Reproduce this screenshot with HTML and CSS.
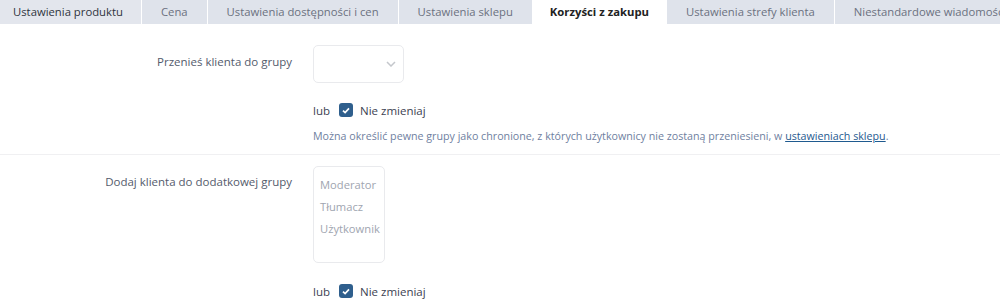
FILE: index.html
```html
<!DOCTYPE html>
<html lang="pl">
<head>
    <meta charset="UTF-8">
    <title>Korzyści z zakupu</title>
    <link rel="stylesheet" href="styles.css">
</head>
<body>

    <!-- Tabs -->
    <div class="tabs">
        <div class="tab tab-first">Ustawienia produktu</div>
        <div class="tab">Cena</div>
        <div class="tab">Ustawienia dostępności i cen</div>
        <div class="tab">Ustawienia sklepu</div>
        <div class="tab active">Korzyści z zakupu</div>
        <div class="tab">Ustawienia strefy klienta</div>
        <div class="tab">Niestandardowe wiadomości</div>
    </div>

    <!-- Move to group -->
    <div class="section section-first">
        <div class="row">
            <label class="row-label label-mid">Przenieś klienta do grupy</label>
            <div class="row-control">
                <div class="select">
                    <svg class="chevron" width="10" height="6" viewBox="0 0 10 6">
                        <path d="M1 1 L5 5 L9 1" fill="none" stroke="#c4c7cc" stroke-width="1.5"/>
                    </svg>
                </div>
                <div class="keep">
                    <span>lub</span>
                    <span class="check">
                        <svg width="8" height="7" viewBox="0 0 8 7">
                            <path d="M1 3.6 L3.1 5.6 L7 1.4" fill="none" stroke="#fff" stroke-width="1.7"/>
                        </svg>
                    </span>
                    <span>Nie zmieniaj</span>
                </div>
                <p class="hint">Można określić pewne grupy jako chronione, z których użytkownicy nie zostaną przeniesieni, w <a href="#">ustawieniach sklepu</a>.</p>
            </div>
        </div>
    </div>

    <!-- Additional group -->
    <div class="section">
        <div class="row">
            <label class="row-label label-top">Dodaj klienta do dodatkowej grupy</label>
            <div class="row-control">
                <div class="multi">
                    <div class="option">Moderator</div>
                    <div class="option">Tłumacz</div>
                    <div class="option">Użytkownik</div>
                </div>
                <div class="keep keep-last">
                    <span>lub</span>
                    <span class="check">
                        <svg width="8" height="7" viewBox="0 0 8 7">
                            <path d="M1 3.6 L3.1 5.6 L7 1.4" fill="none" stroke="#fff" stroke-width="1.7"/>
                        </svg>
                    </span>
                    <span>Nie zmieniaj</span>
                </div>
            </div>
        </div>
    </div>

</body>
</html>
```

FILE: styles.css
```css
* {
  margin: 0;
  padding: 0;
  box-sizing: border-box;
}

body {
  background: #fff;
  font-family: "Open Sans", "Noto Sans", sans-serif;
  font-size: 11.5px;
  color: #4f5668;
  overflow: hidden;
}

/* tab bar */
.tabs {
  display: flex;
  gap: 1px;
  background: #fff;
  height: 24px;
  white-space: nowrap;
  font-size: 11.3px;
  overflow: hidden;
}

.tab {
  background: #dfe3eb;
  color: #6b7180;
  padding: 0 19px;
  line-height: 24px;
  flex: none;
}

.tab-first {
  padding-left: 13px;
  padding-right: 18px;
  color: #2f3440;
  background: #e3e6ed;
}

.tab:last-child {
  flex: 1;
}

.tab.active {
  background: #fff;
  color: #222;
  font-weight: bold;
  padding: 0 17px;
}

/* form rows */
.section {
  border-top: 1px solid #f0f0f2;
  padding-top: 11px;
}

.section-first {
  border-top: none;
  padding-top: 21px;
  padding-bottom: 11px;
}

.row {
  display: grid;
  grid-template-columns: 292px 1fr;
  column-gap: 21px;
}

.row-label {
  text-align: right;
  color: #545b6c;
}

.label-mid {
  margin-top: 9px;
}

.label-top {
  margin-top: 8px;
}

.select {
  width: 91px;
  height: 38px;
  border: 1px solid #e9eaed;
  border-radius: 5px;
  display: flex;
  justify-content: flex-end;
  align-items: center;
  padding-right: 7px;
}

.keep {
  display: flex;
  align-items: center;
  gap: 7px;
  margin-top: 17px;
  color: #3c4252;
  height: 20px;
}

.keep-last {
  margin-top: 18px;
}

.check {
  width: 14px;
  height: 14px;
  border-radius: 3px;
  background: #2f5f8d;
  display: flex;
  justify-content: center;
  align-items: center;
  margin-left: 2px;
}

.hint {
  margin-top: 9px;
  color: #6f7f9f;
  font-size: 10.7px;
}

.hint a {
  color: #1f5a8f;
}

.multi {
  width: 72px;
  height: 97px;
  border: 1px solid #e9eaed;
  border-radius: 5px;
  padding: 7px 6px;
}

.option {
  color: #a0a5b0;
  line-height: 22px;
  font-size: 11.2px;
  white-space: nowrap;
}
```
